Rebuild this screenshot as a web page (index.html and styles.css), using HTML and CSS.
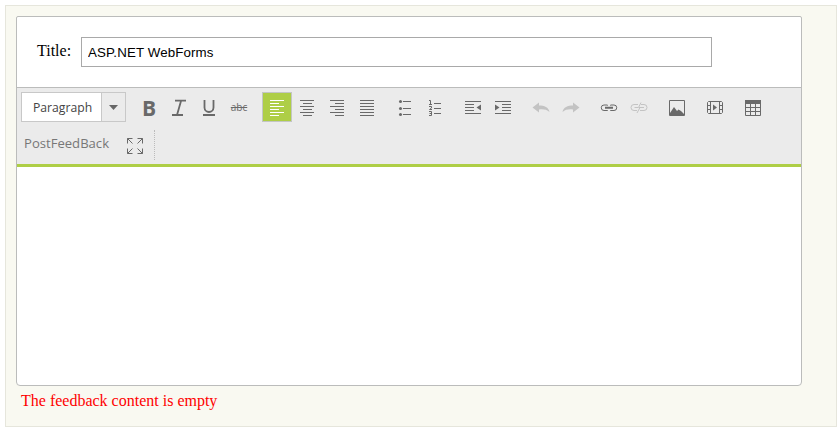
FILE: index.html
```
<!DOCTYPE html>
<html lang="en">
<head>
<meta charset="utf-8">
<title>Feedback</title>
<link rel="stylesheet" href="styles.css">
</head>
<body>
<main class="page">
  <section class="panel">
    <div class="title-row">
      <label class="title-label" for="title">Title:</label>
      <input class="title-input" id="title" type="text" value="ASP.NET WebForms">
    </div>
    <div class="toolbar">
      <div class="tools">
        <div class="combo"><span class="combo-text">Paragraph</span><span class="combo-arrow"><svg width="9" height="5"><path d="M0 0h9L4.500 5z"/></svg></span></div>
        <div class="group">
          <button class="tool bold"><span>B</span></button>
          <button class="tool"><svg><path class="mid" d="M11 8.700H22M8 23H19M17 9L13 23"/></svg></button>
          <button class="tool"><svg><path class="mid" d="M10.500 8v7.500a4.500 4.500 0 0 0 9 0V8M9 23h12"/></svg></button>
          <button class="tool strike"><span>abc</span></button>
        </div>
        <div class="group">
          <button class="tool active"><svg><path d="M7 7.500h14M7 10.500h9M7 13.500h14M7 16.500h9M7 19.500h14M7 22.500h9"/></svg></button>
          <button class="tool"><svg><path d="M8 8.500h14M11 11.500h9M8 14.500h14M11 17.500h9M8 20.500h14M11 23.500h9"/></svg></button>
          <button class="tool"><svg><path d="M8 8.500h14M13 11.500h9M8 14.500h14M13 17.500h9M8 20.500h14M13 23.500h9"/></svg></button>
          <button class="tool"><svg><path d="M8 8.500h14M8 11.500h14M8 14.500h14M8 17.500h14M8 20.500h14M8 23.500h14"/></svg></button>
        </div>
        <div class="group">
          <button class="tool"><svg><path d="M13 9.500h8M13 16.500h8M13 22.500h8"/><g class="fill"><circle cx="10.500" cy="9.500" r="1.500"/><circle cx="10.500" cy="16.500" r="1.500"/><circle cx="10.500" cy="22.500" r="1.500"/></g></svg></button>
          <button class="tool"><svg><path d="M14 11.500h7M14 16.500h7M14 21.500h7M9 8.500h1.500V12M9 12.500h3M9 14.500h2.500v1.500L9.500 17.500H12M9 19.500h2.500v4H9M9.500 21.500h2"/></svg></button>
        </div>
        <div class="group">
          <button class="tool"><svg><path d="M7 9.500h16M7 12.500h9M7 15.500h9M7 18.500h9M7 21.500h16"/><path class="fill" d="M23 12.500v6L18.500 15.500z"/></svg></button>
          <button class="tool"><svg><path d="M7 9.500h16M14 12.500h9M14 15.500h9M14 18.500h9M7 21.500h16"/><path class="fill" d="M7 12.500v6l4.500-3z"/></svg></button>
        </div>
        <div class="group">
          <button class="tool off"><svg><path class="fill" d="M6.500 15.500L13 10.500v3c5.500 0 9.500 1.500 10.500 6.500-3-2.500-6-3-10.500-2.500v3z"/></svg></button>
          <button class="tool off"><svg><path class="fill" d="M23.500 15.500L17 10.500v3c-5.500 0-9.500 1.500-10.500 6.500 3-2.500 6-3 10.500-2.500v3z"/></svg></button>
        </div>
        <div class="group">
          <button class="tool"><svg><path d="M13.500 13.500v-.5H10a2.500 2.500 0 0 0 0 5.500h3.500V18M16.500 13.500v-.5H20a2.500 2.500 0 0 1 0 5.500h-3.500V18"/><path class="thick" d="M11 15.700h8"/></svg></button>
          <button class="tool off"><svg><path d="M14 12.500h-4a3 3 0 0 0 0 6h3M17 12.500h3a3 3 0 0 1 0 6h-4M10.500 15.500H14M16 15.500h4M17 10.500l-2.500 5h1.500l-3 5.500"/></svg></button>
        </div>
        <div class="group"><button class="tool"><svg><path d="M7.500 8.500h15v15h-15z"/><path class="fill" d="M8 23v-2l4-6 3 4 1.500-1.500L19 19l4 4z"/></svg></button></div>
        <div class="group"><button class="tool"><svg><path d="M8.500 9.500h13l1 1v10l-1 1h-13l-1-1v-10zM10.500 9.500v12M19.500 9.500v12M8 13.500h2M8 17.500h2M20 13.500h2M20 17.500h2"/><path class="fill" d="M13 12.500v6l4-3z"/></svg></button></div>
        <div class="group"><button class="tool"><svg><path d="M7.500 11v12.500h15V11M12.500 11v12M17.500 11v12M8 15.500h14M8 19.500h14"/><path class="fill" d="M7 8h16v4H7z"/></svg></button></div>
      </div>
      <div class="tools second">
        <button class="custom">PostFeedBack</button>
        <button class="tool"><svg><path d="M12.500 13.500l-5-5M7.500 13.500v-5h5M17.500 13.500l5-5M17.500 8.500h5v5M12.500 18.500l-5 5M7.500 18.500v5h5M17.500 18.500l5 5M17.500 23.500h5v-5"/></svg></button>
        <span class="separator"></span>
      </div>
    </div>
    <div class="editor"></div>
  </section>
  <p class="error">The feedback content is empty</p>
</main>
</body>
</html>
```
FILE: styles.css
```
* { box-sizing: border-box; }
body { margin: 0; background: #fff; font-family: "Liberation Serif", serif; }
.page { width: 832px; height: 422px; margin: 5px; padding: 10px; background: #f9f9f1; border: 1px solid #e6e6dc; }
.panel { display: flex; flex-direction: column; width: 786px; height: 370px; background: #fff; border: 1px solid #bbbcbb; border-radius: 2px 2px 4px 4px; overflow: hidden; }
.title-row { display: flex; align-items: flex-start; height: 71px; padding: 20px 0 0 20px; border-bottom: 1px solid #bbbcbb; }
.title-label { width: 44px; font-size: 16px; line-height: 28px; }
.title-input { width: 631px; height: 30px; padding: 0 6px; border: 1px solid #a9a9a9; font: 13.33px "Liberation Sans", sans-serif; letter-spacing: 0.12px; color: #000; }
.toolbar { height: 79px; padding: 4px; background: #ebebeb; border-bottom: 3px solid #aece46; }
.tools { display: flex; gap: 8px; height: 30px; }
.second { margin-top: 8px; gap: 0; }
.combo { display: flex; width: 105px; height: 30px; border: 1px solid #c8c8c8; background: #fff; font: 12.2px/29px "Open Sans", sans-serif; color: #444; }
.combo-text { flex: 1; padding-left: 11px; }
.combo-arrow { display: flex; align-items: center; justify-content: center; width: 24px; background: #ebebeb; border-left: 1px solid #c8c8c8; fill: #666; }
.group { display: flex; }
.tool { width: 30px; height: 30px; padding: 0; border: 0; background: none; color: #696969; }
.tool svg { display: block; width: 30px; height: 30px; fill: none; stroke: currentColor; stroke-width: 1; }
.tool .fill { fill: currentColor; stroke: none; }
.tool .mid { stroke-width: 1.8; }
.tool .thick { stroke-width: 2; }
.active { border: 1px solid #c3c6c3; background: #aece46; color: #fff; }
.active svg { width: 28px; height: 28px; }
.off { color: #c3c3c3; }
.bold { font: bold 21px/32px "Open Sans", sans-serif; }
.strike { font: 10px/30px "Open Sans", sans-serif; text-decoration: line-through; }
.custom { width: 99px; padding: 0 0 5px 3px; border: 0; background: none; text-align: left; font: 13.1px "Open Sans", sans-serif; color: #777; }
.separator { width: 5px; border-right: 1px dotted #bbb; }
.editor { flex: 1; }
.error { margin: 5px 0 0 5px; font-size: 16px; line-height: 20px; color: #f00; }
```
